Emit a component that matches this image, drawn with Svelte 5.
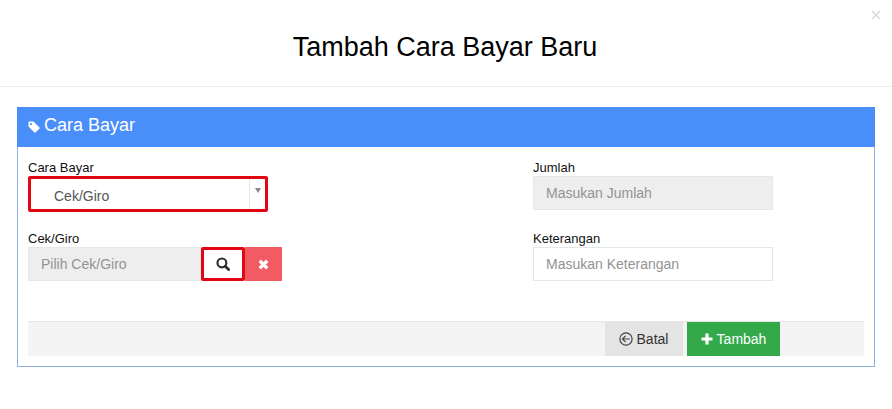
<script>
	let caraBayar = 'Cek/Giro';
</script>

<div class="modal">
	<header class="modal-header">
		<button class="close" aria-label="Tutup">
			<svg viewBox="0 0 10 10" width="10" height="10"><path d="M1 1L9 9M9 1L1 9" /></svg>
		</button>
		<h2>Tambah Cara Bayar Baru</h2>
	</header>

	<div class="modal-body">
		<section class="panel">
			<div class="panel-heading">
				<svg class="tag" viewBox="0 0 12 12" width="12" height="12">
					<path d="M0.5 1.5Q0.5 0.5 1.5 0.5H5.5L11.5 6.5Q12 7 11.5 7.5L7.5 11.5Q7 12 6.5 11.5L0.5 5.5ZM3 2A1.1 1.1 0 1 0 3 4.2A1.1 1.1 0 1 0 3 2Z" fill-rule="evenodd" />
				</svg>
				<span>Cara Bayar</span>
			</div>

			<div class="panel-body">
				<div class="columns">
					<div class="col col-left">
						<div class="field">
							<label for="cara">Cara Bayar</label>
							<div class="select marked" id="cara">
								<span class="select-value">{caraBayar}</span>
								<span class="select-arrow"><i></i></span>
							</div>
						</div>
						<div class="field">
							<label for="cek">Cek/Giro</label>
							<div class="input-group">
								<input id="cek" class="readonly grow" placeholder="Pilih Cek/Giro" readonly />
								<button class="btn-search marked" aria-label="Cari">
									<svg viewBox="0 0 14 14" width="14" height="14">
										<circle cx="5.9" cy="5.9" r="4.4" />
										<path d="M9.2 9.2L12.6 12.6" class="handle" />
									</svg>
								</button>
								<button class="btn-clear" aria-label="Hapus">
									<svg viewBox="0 0 10 10" width="11" height="11"><path d="M1.6 1.6L8.4 8.4M8.4 1.6L1.6 8.4" /></svg>
								</button>
							</div>
						</div>
					</div>

					<div class="col col-right">
						<div class="field">
							<label for="jumlah">Jumlah</label>
							<input id="jumlah" class="readonly" placeholder="Masukan Jumlah" readonly />
						</div>
						<div class="field">
							<label for="ket">Keterangan</label>
							<input id="ket" placeholder="Masukan Keterangan" />
						</div>
					</div>
				</div>

				<div class="actions">
					<button class="btn btn-cancel">
						<svg viewBox="0 0 14 14" width="14" height="14">
							<circle cx="7" cy="7" r="6.1" />
							<path d="M10.8 7H3.6M6.6 3.9L3.5 7L6.6 10.1" />
						</svg>
						Batal
					</button>
					<button class="btn btn-add">
						<svg viewBox="0 0 12 12" width="12" height="12"><path d="M6 0.5V11.5M0.5 6H11.5" /></svg>
						Tambah
					</button>
				</div>
			</div>
		</section>
	</div>
</div>

<style>
	:global(body) {
		margin: 0;
		background: #fff;
	}

	.modal {
		width: 892px;
		height: 409px;
		font-family: 'Liberation Sans', Arial, sans-serif;
		font-size: 14px;
		color: #000;
		overflow: hidden;
	}

	.modal-header {
		position: relative;
		height: 86px;
		border-bottom: 1px solid #eee;
		display: flex;
		align-items: center;
		justify-content: center;
	}

	.modal-header h2 {
		margin: 8px 2px 0 0;
		font-size: 27px;
		font-weight: 400;
		line-height: 30px;
	}

	.close {
		position: absolute;
		top: 10px;
		right: 11px;
		width: 10px;
		height: 10px;
		padding: 0;
		display: flex;
		border: 0;
		background: none;
	}

	.close path {
		stroke: #d8d8d8;
		stroke-width: 1.5;
		fill: none;
	}

	.modal-body {
		padding: 20px 17px 0;
	}

	.panel {
		width: 858px;
		height: 260px;
		box-sizing: border-box;
		border: 1px solid #8db0e0;
		border-top: 0;
	}

	.panel-heading {
		height: 40px;
		margin: 0 -1px;
		padding: 0 0 3px 11px;
		box-sizing: border-box;
		display: flex;
		align-items: center;
		gap: 4px;
		background: #4a8ef9;
		color: #fff;
		font-size: 18px;
	}

	.tag {
		fill: #fff;
		margin-top: 3px;
	}

	.panel-body {
		padding: 12px 10px 0;
	}

	.columns {
		display: flex;
		height: 162px;
	}

	.col-left {
		width: 505px;
	}

	.col-right {
		width: 240px;
	}

	.field {
		height: 71px;
	}

	label {
		display: block;
		height: 17px;
		line-height: 18px;
		font-size: 13px;
		color: #111;
	}

	input {
		display: block;
		width: 100%;
		height: 34px;
		box-sizing: border-box;
		padding: 0 12px;
		border: 1px solid #e5e6e7;
		outline: none;
		background: #fff;
		font: inherit;
		color: #555;
	}

	input::placeholder {
		color: #939393;
		opacity: 1;
	}

	input.readonly {
		background: #eee;
	}

	.select {
		width: 240px;
		height: 36px;
		box-sizing: border-box;
		display: flex;
		align-items: center;
		justify-content: space-between;
		font-size: 14px;
		color: #555;
	}

	.marked {
		border: 3px solid #e30613;
		border-radius: 2px;
	}

	.select-value {
		padding: 3px 0 0 23px;
	}

	.select-arrow {
		width: 16px;
		height: 100%;
		border-left: 1px solid #e5e6e7;
		display: flex;
		justify-content: center;
		padding-top: 9px;
		box-sizing: border-box;
	}

	.select-arrow i {
		border: 3px solid transparent;
		border-top: 5px solid #888;
		border-bottom: 0;
		height: 0;
	}

	.input-group {
		display: flex;
		width: 254px;
		height: 34px;
	}

	.grow {
		flex: 1;
		min-width: 0;
	}

	.btn-search {
		width: 44px;
		height: 34px;
		box-sizing: border-box;
		padding: 0;
		background: #fff;
		display: flex;
		align-items: center;
		justify-content: center;
		flex: none;
	}

	.btn-search circle {
		fill: none;
		stroke: #2f2f2f;
		stroke-width: 2.2;
	}

	.btn-search .handle {
		stroke: #2f2f2f;
		stroke-width: 2.8;
		stroke-linecap: round;
	}

	.btn-clear {
		width: 37px;
		height: 34px;
		padding: 0;
		border: 0;
		background: #f25a64;
		display: flex;
		align-items: center;
		justify-content: center;
		flex: none;
	}

	.btn-clear path {
		stroke: #fff;
		stroke-width: 3;
		fill: none;
	}

	.actions {
		height: 35px;
		box-sizing: border-box;
		border-top: 1px solid #e7e7e7;
		background: #f4f4f4;
		display: flex;
		justify-content: flex-end;
		gap: 4px;
		padding-right: 84px;
	}

	.btn {
		height: 34px;
		border: 0;
		padding: 0;
		display: flex;
		align-items: center;
		justify-content: center;
		gap: 4px;
		font: inherit;
	}

	.btn-cancel {
		width: 78px;
		padding-right: 1px;
		box-sizing: border-box;
		background: #e4e4e4;
		color: #333;
	}

	.btn-cancel svg {
		fill: none;
		stroke: #444;
		stroke-width: 1.2;
	}

	.btn-add {
		width: 93px;
		background: #34a94a;
		color: #fff;
	}

	.btn-add path {
		stroke: #fff;
		stroke-width: 3.2;
		fill: none;
	}
</style>
